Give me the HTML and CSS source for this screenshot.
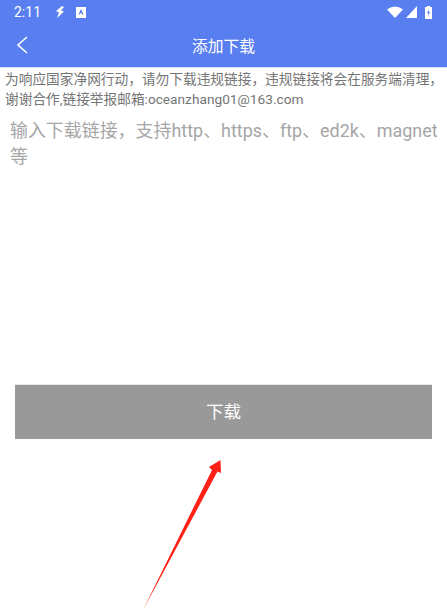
FILE: index.html
```html
<!DOCTYPE html>
<html lang="zh-CN">
<head>
  <meta charset="UTF-8">
  <title>添加下载</title>
  <link rel="stylesheet" href="styles.css">
</head>
<body>

<div class="status-bar">
  <span class="time">2:11</span>
  <svg class="icon-bolt" width="12" height="14" viewBox="0 0 12 14"><path d="M8 1 L2 6 L5 7.500 L3 13 L10 6.500 L7 5.500 L10 2 Z" fill="#fff"/></svg>
  <svg class="icon-a" width="10" height="11" viewBox="0 0 10 11"><path fill="#fff" fill-rule="evenodd" d="M0 0 H10 V11 H0 Z M5 2 L2.500 7.500 H3.800 L4.300 6.300 H5.700 L6.200 7.500 H7.500 Z"/></svg>
  <span class="status-right">
    <svg width="16" height="12" viewBox="0 0 16 12"><path d="M0 3.500 Q8 -2.500 16 3.500 L8 12 Z" fill="#fff"/></svg>
    <svg class="icon-signal" width="11" height="12" viewBox="0 0 11 12"><path d="M11 0 V12 H0 Z" fill="#fff"/></svg>
    <svg class="icon-battery" width="7" height="13" viewBox="0 0 7 13"><path fill="#fff" fill-rule="evenodd" d="M2 0 H5 V1 H7 V13 H0 V1 H2 Z M4 3 L2 7 H3.300 L3 10.500 L5 6 H3.700 Z"/></svg>
  </span>
</div>

<div class="header">
  <svg class="back" width="12" height="18" viewBox="0 0 12 18"><path d="M11 1 L2 9 L11 17" fill="none" stroke="#fff" stroke-width="1.600"/></svg>
  <span class="title">添加下载</span>
</div>

<p class="notice">为响应国家净网行动，请勿下载违规链接，违规链接将会在服务端清理，谢谢合作,链接举报邮箱:oceanzhang01@163.com</p>

<div class="link-input">输入下载链接，支持http、https、ftp、ed2k、magnet等</div>

<button class="download-btn">下载</button>

<!-- red annotation arrow -->
<svg class="arrow" width="100" height="160" viewBox="0 0 100 160"><path d="M13 160 L82 20 L79 17 L90.500 10 L91 23 L87.500 21.500 Z" fill="#ff2016"/></svg>

</body>
</html>
```

FILE: styles.css
```css
body {
  margin: 0;
  background: #fff;
  font-family: Roboto, "Noto Sans CJK SC", sans-serif;
  position: relative;
  height: 610px;
  overflow: hidden;
}

.status-bar {
  height: 24px;
  padding: 0 15px 2px 14px;
  background: #587ef0;
  color: #fff;
  display: flex;
  align-items: center;
}

.time {
  font-size: 14px;
  width: 40px;
}

.icon-a {
  margin-left: 10px;
}

.status-right {
  margin-left: auto;
  display: flex;
  align-items: center;
  gap: 3px;
}

.icon-battery {
  margin-left: 5px;
}

.header {
  height: 41px;
  background: #587ef0;
  display: flex;
  align-items: center;
  justify-content: center;
  position: relative;
}

.back {
  position: absolute;
  left: 16px;
  top: 10px;
}

.title {
  color: #fff;
  font-size: 15.800px;
  margin-top: -3px;
}

.notice {
  margin: 0;
  padding: 1px 0 0 5px;
  border-top: 1px solid #d8e0f8;
  font-size: 13.700px;
  line-height: 20px;
  color: #757575;
  height: 40px;
}

.link-input {
  margin-top: 9px;
  padding: 0 5px 0 10px;
  height: 267px;
  font-size: 17.950px;
  line-height: 26px;
  color: #a6a6a6;
}

.download-btn {
  display: block;
  width: 417px;
  height: 54px;
  margin: 0 0 0 15px;
  padding: 0 0 3px;
  border: none;
  box-shadow: 0 -1px #e6e6e6;
  background: #999;
  color: #fff;
  font-family: inherit;
  font-size: 17.500px;
}

.arrow {
  position: absolute;
  left: 130px;
  top: 450px;
}
```
